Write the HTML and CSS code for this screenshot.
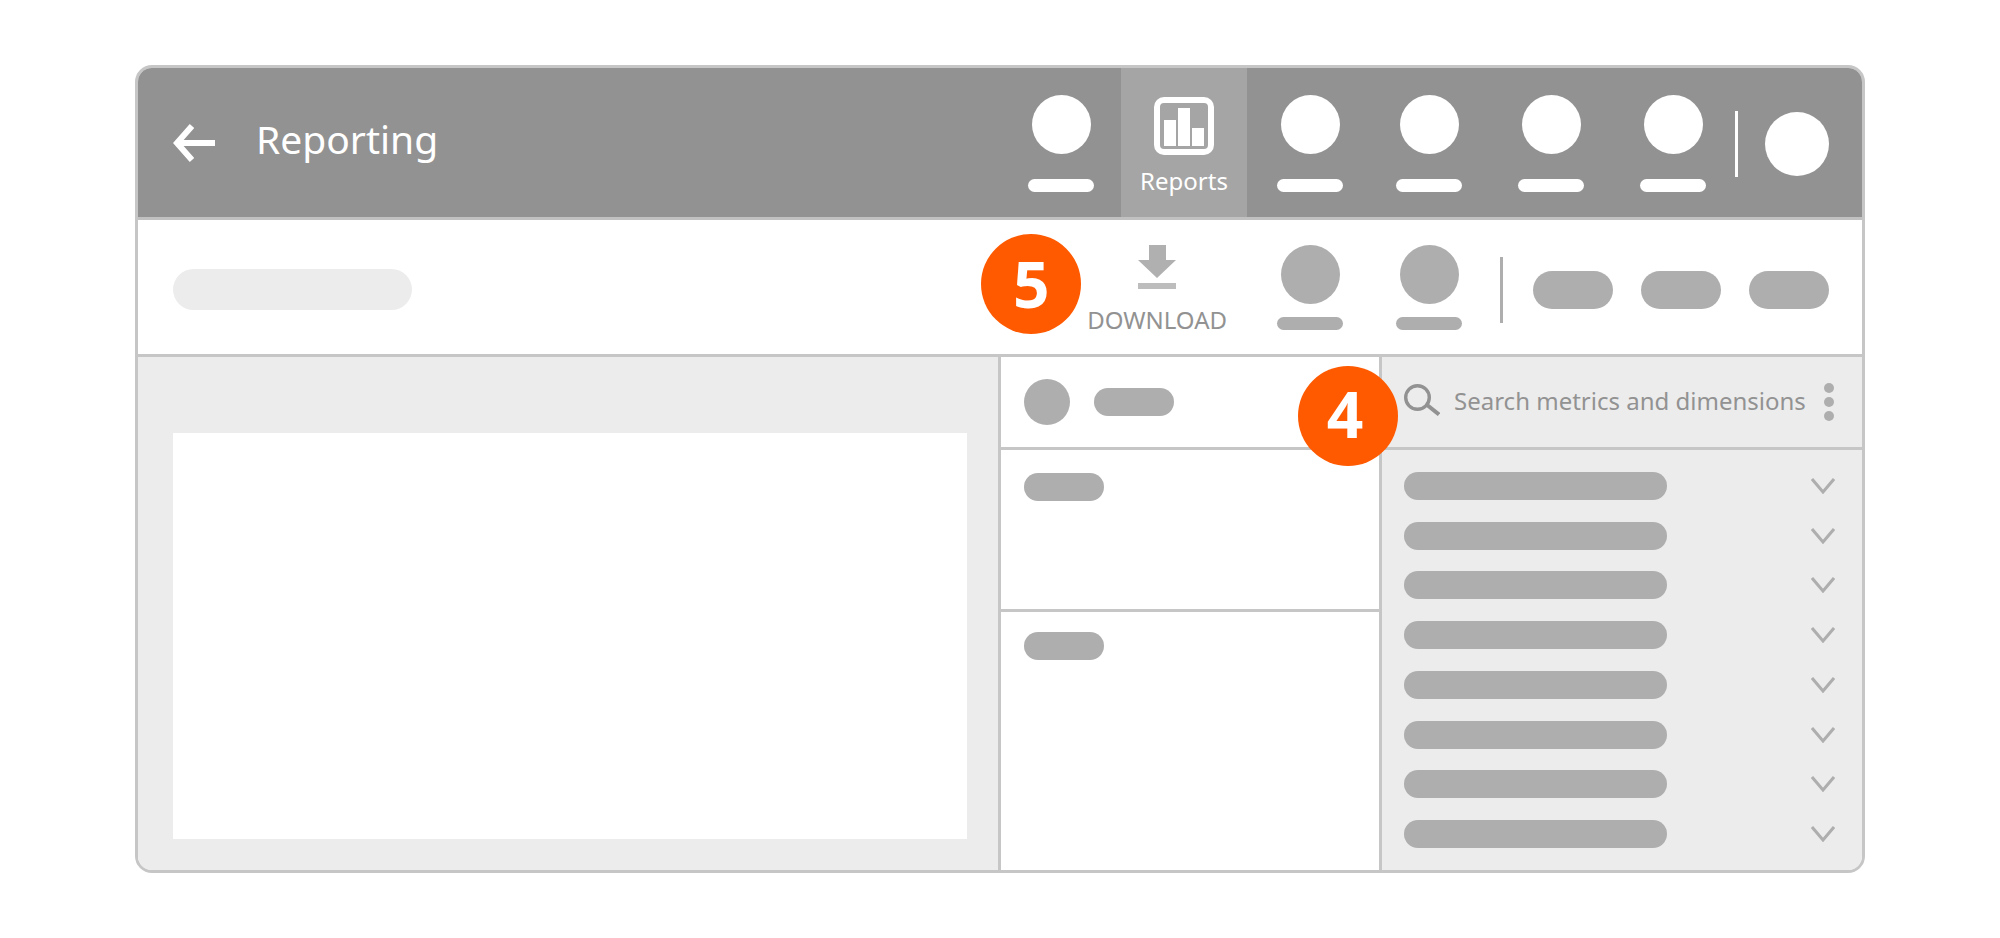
FILE: index.html
```html
<!DOCTYPE html>
<html lang="en">
<head>
<meta charset="utf-8">
<meta name="viewport" content="width=device-width, initial-scale=1">
<title>Reporting</title>
<link rel="stylesheet" href="styles.css">
</head>
<body>
<main class="window">
  <header class="topbar">
    <button class="back" type="button" aria-label="Back">
      <svg width="42" height="38" viewBox="0 0 42 38" fill="none" stroke="#fff" stroke-width="6"><path d="M19 2L4 19l15 17M5 19h37"/></svg>
    </button>
    <h1 class="title">Reporting</h1>
    <nav class="tabs">
      <button class="tab tab-first" type="button" aria-label="Tab 1"><span class="dot"></span><span class="bar"></span></button>
      <button class="tab tab-active" type="button">
        <svg width="60" height="58" viewBox="0 0 60 58"><rect x="3" y="3" width="54" height="52" rx="7" fill="none" stroke="#fff" stroke-width="6"/><path fill="#fff" d="M10 23h12v26H10zM24 11h12v38H24zM38 31h12v18H38z"/></svg>
        <span class="tab-label">Reports</span>
      </button>
      <button class="tab" type="button" aria-label="Tab 3"><span class="dot"></span><span class="bar"></span></button>
      <button class="tab" type="button" aria-label="Tab 4"><span class="dot"></span><span class="bar"></span></button>
      <button class="tab" type="button" aria-label="Tab 5"><span class="dot"></span><span class="bar"></span></button>
      <button class="tab" type="button" aria-label="Tab 6"><span class="dot"></span><span class="bar"></span></button>
    </nav>
    <span class="rule"></span>
    <button class="avatar" type="button" aria-label="Account"></button>
  </header>

  <section class="toolbar">
    <span class="name"></span>
    <div class="actions">
      <div class="download-wrap">
        <button class="download" type="button">
          <svg width="38" height="44" viewBox="0 0 38 44" fill="#b0b0b0"><path d="M11 0h17v15h10L19 33 0 15h11z"/><path fill="#bdbdbd" d="M0 38h38v6H0z"/></svg>
          <span>DOWNLOAD</span>
        </button>
        <span class="badge badge-five">5</span>
      </div>
      <button class="tab" type="button" aria-label="Action 2"><span class="dot"></span><span class="bar"></span></button>
      <button class="tab" type="button" aria-label="Action 3"><span class="dot"></span><span class="bar"></span></button>
    </div>
    <span class="rule"></span>
    <div class="pills">
      <button class="pill pill-tall" type="button" aria-label="Option 1"></button>
      <button class="pill pill-tall" type="button" aria-label="Option 2"></button>
      <button class="pill pill-tall" type="button" aria-label="Option 3"></button>
    </div>
  </section>

  <div class="content">
    <section class="canvas"><div class="sheet"></div></section>
    <section class="settings">
      <div class="settings-head"><span class="disc"></span><span class="pill"></span></div>
      <div class="settings-group"><span class="pill"></span></div>
      <div class="settings-rest"><span class="pill"></span></div>
    </section>
    <aside class="fields">
      <div class="search">
        <label class="search-icon" for="q" aria-label="Search">
          <svg width="36" height="32" viewBox="0 0 36 32" fill="none" stroke="#929292"><circle cx="13.500" cy="13.500" r="11.800" stroke-width="3.400"/><path stroke-width="4" d="M22.500 20.500L35 30.500"/></svg>
        </label>
        <input class="search-input" id="q" type="text" placeholder="Search metrics and dimensions">
        <button class="more" type="button" aria-label="More">
          <svg width="10" height="38" viewBox="0 0 10 38" fill="#aeaeae"><circle cx="5" cy="5" r="5"/><circle cx="5" cy="19" r="5"/><circle cx="5" cy="33" r="5"/></svg>
        </button>
        <span class="badge badge-four">4</span>
      </div>
      <ul class="list">
        <li><button class="row" type="button" aria-label="Group 1"><span class="line"></span><svg class="chevron" viewBox="0 0 24 16"><path d="M1 1l11 13L23 1"/></svg></button></li>
        <li><button class="row" type="button" aria-label="Group 2"><span class="line"></span><svg class="chevron" viewBox="0 0 24 16"><path d="M1 1l11 13L23 1"/></svg></button></li>
        <li><button class="row" type="button" aria-label="Group 3"><span class="line"></span><svg class="chevron" viewBox="0 0 24 16"><path d="M1 1l11 13L23 1"/></svg></button></li>
        <li><button class="row" type="button" aria-label="Group 4"><span class="line"></span><svg class="chevron" viewBox="0 0 24 16"><path d="M1 1l11 13L23 1"/></svg></button></li>
        <li><button class="row" type="button" aria-label="Group 5"><span class="line"></span><svg class="chevron" viewBox="0 0 24 16"><path d="M1 1l11 13L23 1"/></svg></button></li>
        <li><button class="row" type="button" aria-label="Group 6"><span class="line"></span><svg class="chevron" viewBox="0 0 24 16"><path d="M1 1l11 13L23 1"/></svg></button></li>
        <li><button class="row" type="button" aria-label="Group 7"><span class="line"></span><svg class="chevron" viewBox="0 0 24 16"><path d="M1 1l11 13L23 1"/></svg></button></li>
        <li><button class="row" type="button" aria-label="Group 8"><span class="line"></span><svg class="chevron" viewBox="0 0 24 16"><path d="M1 1l11 13L23 1"/></svg></button></li>
      </ul>
    </aside>
  </div>
</main>
</body>
</html>
```
FILE: styles.css
```css
* { box-sizing: border-box; }

body {
  margin: 0;
  padding: 65px 135px;
  min-height: 100vh;
  display: flex;
  flex-direction: column;
  background: #fff;
  font-family: "Noto Sans", "Open Sans", sans-serif;
  font-size: 24px;
  line-height: 32px;
}

button {
  margin: 0;
  padding: 0;
  border: 0;
  background: none;
  font: inherit;
  color: inherit;
  cursor: pointer;
}

svg { display: block; flex: none; }

.window {
  flex: 1;
  display: flex;
  flex-direction: column;
  border: 3px solid #c6c6c6;
  border-radius: 17px;
  overflow: hidden;
}

.topbar {
  display: flex;
  align-items: center;
  height: 152px;
  padding: 0 33px 0 35px;
  background: #929292;
  border-bottom: 3px solid #c1c1c1;
  color: #fff;
}

.title {
  flex: 1;
  margin: 0 0 0 41px;
  padding-bottom: 8px;
  font-size: 39px;
  line-height: 56px;
  font-weight: 400;
}

.tabs {
  display: flex;
  align-self: stretch;
  margin-right: 1px;
}

.tab {
  display: flex;
  flex-direction: column;
  align-items: center;
  width: 122px;
  padding-top: 27px;
}

.tab-first { width: 120px; }

.tab-active {
  width: 126px;
  padding-top: 29px;
  background: #a5a5a5;
}

.tab-active + .tab {
  width: 121px;
  padding-left: 5px;
}

.tab-label { margin-top: 10px; }

.dot {
  width: 59px;
  height: 59px;
  border-radius: 50%;
  background: currentColor;
}

.bar {
  width: 66px;
  height: 13px;
  margin-top: 25px;
  border-radius: 8px;
  background: currentColor;
}

.rule {
  width: 3px;
  height: 66px;
  background: currentColor;
}

.avatar {
  width: 64px;
  height: 64px;
  margin-left: 27px;
  border-radius: 50%;
  background: #fff;
}

.topbar .rule,
.avatar { margin-top: 2px; }

.toolbar {
  display: flex;
  align-items: center;
  height: 137px;
  padding: 5px 33px 0 35px;
  border-bottom: 3px solid #c6c6c6;
  color: #aeaeae;
}

.name {
  width: 239px;
  height: 41px;
  margin-right: auto;
  border-radius: 21px;
  background: #ececec;
}

.actions {
  display: flex;
  align-self: stretch;
  margin-right: 10px;
}

.actions .tab { padding-top: 20px; }

.actions .bar { margin-top: 13px; }

.download-wrap {
  position: relative;
  margin-right: 22px;
}

.download-wrap + .tab {
  width: 119px;
  padding-left: 3px;
}

.download {
  display: flex;
  flex-direction: column;
  align-items: center;
  padding-top: 20px;
  color: #929292;
}

.download span { margin-top: 15px; }

.badge {
  position: absolute;
  width: 100px;
  height: 100px;
  border-radius: 50%;
  background: #ff5a00;
  color: #fff;
  font-size: 64px;
  line-height: 100px;
  font-weight: 700;
  text-align: center;
}

.badge-five { top: 9px; right: calc(100% + 6px); }

.badge-four {
  top: 9px;
  left: -84px;
  padding-right: 6px;
  line-height: 96px;
}

.pills {
  display: flex;
  gap: 28px;
  margin-left: 30px;
}

.pill {
  width: 80px;
  height: 28px;
  border-radius: 19px;
  background: #aeaeae;
}

.pill-tall { height: 38px; }

.content {
  flex: 1;
  display: flex;
}

.canvas {
  flex: 1;
  display: flex;
  padding: 76px 31px 31px 35px;
  background: #ececec;
}

.sheet { flex: 1; background: #fff; }

.settings {
  display: flex;
  flex-direction: column;
  width: 384px;
  border: solid #c6c6c6;
  border-width: 0 3px;
}

.settings-head {
  display: flex;
  align-items: center;
  gap: 24px;
  height: 93px;
  padding: 0 23px;
  border-bottom: 3px solid #c6c6c6;
}

.disc {
  width: 46px;
  height: 46px;
  border-radius: 50%;
  background: #aeaeae;
}

.settings-group {
  display: flex;
  height: 162px;
  padding: 23px;
  border-bottom: 3px solid #c6c6c6;
}

.settings-rest {
  display: flex;
  padding: 20px 23px;
}

.fields {
  display: flex;
  flex-direction: column;
  width: 480px;
  background: #ececec;
}

.search {
  position: relative;
  display: flex;
  align-items: center;
  height: 93px;
  padding: 0 28px 0 22px;
  border-bottom: 3px solid #c6c6c6;
}

.search-icon { padding-bottom: 5px; }

.search-input {
  flex: 1;
  min-width: 0;
  margin: 0 12px 0 14px;
  padding: 0 0 3px;
  border: 0;
  outline: 0;
  background: none;
  font: inherit;
  color: #929292;
}

.search-input::placeholder { color: #929292; opacity: 1; }

.list {
  flex: 1;
  display: flex;
  flex-direction: column;
  justify-content: space-between;
  margin: 0;
  padding: 22px 27px 22px 22px;
  list-style: none;
}

.list li { display: flex; }

.row {
  flex: 1;
  display: flex;
  align-items: center;
  justify-content: space-between;
}

.line {
  width: 263px;
  height: 28px;
  border-radius: 14px;
  background: #aeaeae;
}

.chevron {
  width: 24px;
  height: 16px;
  fill: none;
  stroke: #aeaeae;
  stroke-width: 3;
}
```
